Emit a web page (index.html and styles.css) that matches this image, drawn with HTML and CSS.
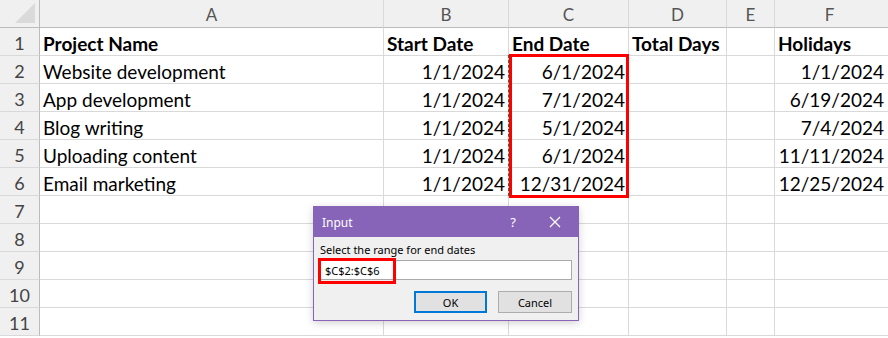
FILE: index.html
```html
<!DOCTYPE html>
<html lang="en">
<head>
    <meta charset="UTF-8">
    <title>Input - End dates</title>
    <link rel="stylesheet" href="styles.css">
</head>
<body>
    <div class="sheet">
        <div class="grid">
            <div class="corner"><span class="tri"></span></div>
            <div class="col-head">A</div>
            <div class="col-head">B</div>
            <div class="col-head">C</div>
            <div class="col-head">D</div>
            <div class="col-head">E</div>
            <div class="col-head last">F</div>

            <div class="row-head">1</div>
            <div class="cell bold">Project Name</div>
            <div class="cell bold">Start Date</div>
            <div class="cell bold">End Date</div>
            <div class="cell bold">Total Days</div>
            <div class="cell"></div>
            <div class="cell bold last">Holidays</div>

            <div class="row-head">2</div>
            <div class="cell">Website development</div>
            <div class="cell num">1/1/2024</div>
            <div class="cell num">6/1/2024</div>
            <div class="cell"></div>
            <div class="cell"></div>
            <div class="cell num last">1/1/2024</div>

            <div class="row-head">3</div>
            <div class="cell">App development</div>
            <div class="cell num">1/1/2024</div>
            <div class="cell num">7/1/2024</div>
            <div class="cell"></div>
            <div class="cell"></div>
            <div class="cell num last">6/19/2024</div>

            <div class="row-head">4</div>
            <div class="cell">Blog writing</div>
            <div class="cell num">1/1/2024</div>
            <div class="cell num">5/1/2024</div>
            <div class="cell"></div>
            <div class="cell"></div>
            <div class="cell num last">7/4/2024</div>

            <div class="row-head">5</div>
            <div class="cell">Uploading content</div>
            <div class="cell num">1/1/2024</div>
            <div class="cell num">6/1/2024</div>
            <div class="cell"></div>
            <div class="cell"></div>
            <div class="cell num last">11/11/2024</div>

            <div class="row-head">6</div>
            <div class="cell">Email marketing</div>
            <div class="cell num">1/1/2024</div>
            <div class="cell num">12/31/2024</div>
            <div class="cell"></div>
            <div class="cell"></div>
            <div class="cell num last">12/25/2024</div>

            <div class="row-head">7</div>
            <div class="cell"></div><div class="cell"></div><div class="cell"></div><div class="cell"></div><div class="cell"></div><div class="cell last"></div>
            <div class="row-head">8</div>
            <div class="cell"></div><div class="cell"></div><div class="cell"></div><div class="cell"></div><div class="cell"></div><div class="cell last"></div>
            <div class="row-head">9</div>
            <div class="cell"></div><div class="cell"></div><div class="cell"></div><div class="cell"></div><div class="cell"></div><div class="cell last"></div>
            <div class="row-head">10</div>
            <div class="cell"></div><div class="cell"></div><div class="cell"></div><div class="cell"></div><div class="cell"></div><div class="cell last"></div>
            <div class="row-head">11</div>
            <div class="cell"></div><div class="cell"></div><div class="cell"></div><div class="cell"></div><div class="cell"></div><div class="cell last"></div>
        </div>

        <!-- copied range marquee + highlight -->
        <div class="marquee"></div>
        <div class="highlight"></div>

        <div class="dialog">
            <div class="title-bar">
                <span class="title">Input</span>
                <span class="help">?</span>
                <svg class="close" width="12" height="12" viewBox="0 0 12 12">
                    <path d="M1 1 L11 11 M11 1 L1 11" stroke="#fff" stroke-width="1.2" fill="none"/>
                </svg>
            </div>
            <div class="dialog-body">
                <label class="prompt">Select the range for end dates</label>
                <div class="field">
                    <span class="field-text">$C$2:$C$6</span>
                    <span class="field-mark"></span>
                </div>
                <div class="buttons">
                    <button class="btn default">OK</button>
                    <button class="btn">Cancel</button>
                </div>
            </div>
        </div>
    </div>
</body>
</html>
```

FILE: styles.css
```css
* {
    box-sizing: border-box;
    margin: 0;
    padding: 0;
}

body {
    background: #fff;
    overflow: hidden;
}

.sheet {
    position: relative;
    width: 888px;
    height: 338px;
    overflow: hidden;
    font-family: 'Lato', 'Liberation Sans', sans-serif;
}

.grid {
    display: grid;
    grid-template-columns: 40px 344px 125px 120px 98px 48px 1fr;
    grid-auto-rows: 28px;
}

.corner,
.col-head,
.row-head {
    background: #f0f0f0;
    color: #555;
}

.corner {
    position: relative;
    border-right: 1px solid #bcbcbc;
    border-bottom: 1px solid #bcbcbc;
}

.tri {
    position: absolute;
    right: 4px;
    bottom: 4px;
    width: 0;
    height: 0;
    border-left: 20px solid transparent;
    border-bottom: 20px solid #dadada;
}

.col-head {
    display: flex;
    align-items: center;
    justify-content: center;
    font-size: 17px;
    padding-top: 2px;
    border-right: 1px solid #d9d9d9;
    border-bottom: 1px solid #bcbcbc;
}

.row-head {
    display: flex;
    align-items: center;
    justify-content: center;
    font-size: 18px;
    padding-top: 3px;
    color: #444;
    border-right: 1px solid #bcbcbc;
    border-bottom: 1px solid #d9d9d9;
}

.cell {
    display: flex;
    align-items: center;
    padding: 3px 3px 0 3px;
    font-size: 19px;
    color: #000;
    white-space: nowrap;
    border-right: 1px solid #d9d9d9;
    border-bottom: 1px solid #d9d9d9;
}

.cell.bold {
    font-weight: 700;
}

.cell.num {
    justify-content: flex-end;
}

.cell.last,
.col-head.last {
    border-right: none;
    padding-right: 4px;
}

.marquee {
    position: absolute;
    left: 508px;
    top: 55px;
    width: 121px;
    height: 141px;
    border: 1px dashed #217346;
}

.highlight {
    position: absolute;
    left: 509px;
    top: 54px;
    width: 120px;
    height: 144px;
    border: 3px solid #f00;
}

.dialog {
    position: absolute;
    left: 313px;
    top: 206px;
    width: 266px;
    height: 115px;
    background: #f0f0f0;
    border: 1px solid #8764b8;
    box-shadow: 0 2px 8px rgba(0, 0, 0, 0.18);
    display: flex;
    flex-direction: column;
    font-family: 'Noto Sans', 'Open Sans', sans-serif;
}

.title-bar {
    display: flex;
    align-items: center;
    height: 30px;
    background: #8764b8;
    color: #fff;
    padding: 0 17px 0 8px;
}

.title {
    flex: 1;
    font-size: 12px;
}

.help {
    font-size: 13px;
    margin-right: 33px;
}

.dialog-body {
    display: flex;
    flex-direction: column;
    padding: 5px 6px 0 4px;
}

.prompt {
    font-size: 11px;
    color: #000;
    padding-left: 2px;
    line-height: 16px;
}

.field {
    position: relative;
    height: 20px;
    margin-top: 2px;
    background: #fff;
    border: 1px solid #a9a9a9;
    display: flex;
    align-items: center;
    padding-left: 6px;
}

.field-text {
    font-size: 11px;
    color: #000;
}

.field-mark {
    position: absolute;
    left: -1px;
    top: -3px;
    width: 78px;
    height: 26px;
    border: 3px solid #f00;
}

.buttons {
    display: flex;
    justify-content: flex-end;
    gap: 11px;
    margin-top: 11px;
}

.btn {
    width: 74px;
    height: 22px;
    font-family: inherit;
    font-size: 11px;
    color: #000;
    background: #e1e1e1;
    border: 1px solid #adadad;
}

.btn.default {
    width: 73px;
    border: 2px solid #0078d7;
}
```
